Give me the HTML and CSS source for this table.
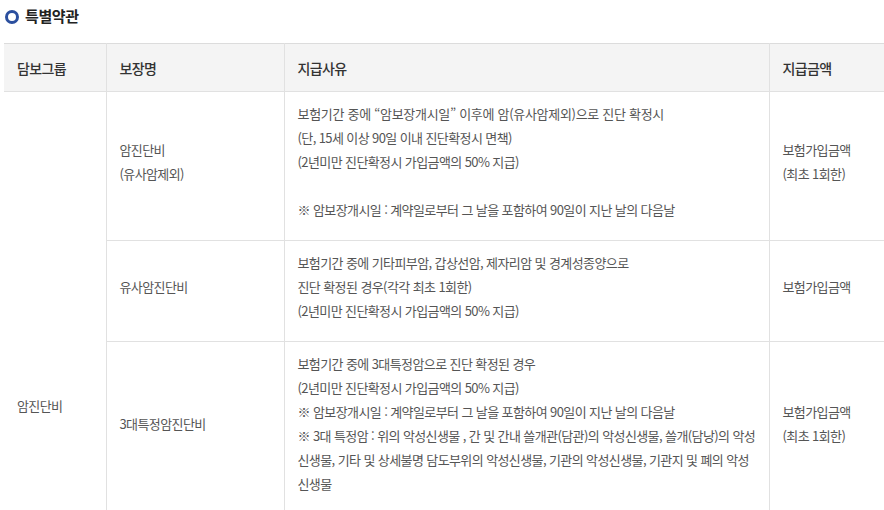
FILE: index.html
```html
<!DOCTYPE html>
<html lang="ko">
<head>
<meta charset="utf-8">
<link rel="stylesheet" href="styles.css">
</head>
<body>
<div class="wrap">
  <h3 class="title"><span class="dot"></span>특별약관</h3>
  <table class="terms">
    <colgroup>
      <col class="c1"><col class="c2"><col class="c3"><col class="c4">
    </colgroup>
    <thead>
      <tr><th>담보그룹</th><th>보장명</th><th>지급사유</th><th>지급금액</th></tr>
    </thead>
    <tbody>
      <tr>
        <td rowspan="3" class="group">암진단비</td>
        <td>암진단비<br>(유사암제외)</td>
        <td><span class="wide">보험기간 중에 “암보장개시일” 이후에 암(유사암제외)으로 진단 확정시</span><br>(단, 15세 이상 90일 이내 진단확정시 면책)<br>(2년미만 진단확정시 가입금액의 50% 지급)<br><br>※ 암보장개시일 : 계약일로부터 그 날을 포함하여 90일이 지난 날의 다음날</td>
        <td>보험가입금액<br>(최초 1회한)</td>
      </tr>
      <tr>
        <td>유사암진단비</td>
        <td>보험기간 중에 기타피부암, 갑상선암, 제자리암 및 경계성종양으로<br>진단 확정된 경우(각각 최초 1회한)<br>(2년미만 진단확정시 가입금액의 50% 지급)</td>
        <td>보험가입금액</td>
      </tr>
      <tr class="last">
        <td>3대특정암진단비</td>
        <td>보험기간 중에 3대특정암으로 진단 확정된 경우<br>(2년미만 진단확정시 가입금액의 50% 지급)<br>※ 암보장개시일 : 계약일로부터 그 날을 포함하여 90일이 지난 날의 다음날<br>※ 3대 특정암 : 위의 악성신생물 , 간 및 간내 쓸개관(담관)의 악성신생물, 쓸개(담낭)의 악성신생물, 기타 및 상세불명 담도부위의 악성신생물, 기관의 악성신생물, 기관지 및 폐의 악성신생물</td>
        <td>보험가입금액<br>(최초 1회한)</td>
      </tr>
    </tbody>
  </table>
</div>
</body>
</html>
```

FILE: styles.css
```css
* { box-sizing: border-box; }
html, body { margin: 0; padding: 0; background: #fff; }
body {
  font-family: "Noto Sans CJK KR", "Noto Sans", sans-serif;
  color: #555;
  overflow: hidden;
}
.wrap { padding: 7px 0 0 4px; width: 884px; }
.title {
  margin: 0 0 18px 0;
  display: flex;
  align-items: center;
  gap: 6px;
  font-size: 15px;
  font-weight: 700;
  line-height: 18px;
  color: #222;
  letter-spacing: -0.4px;
}
.dot {
  width: 14px;
  height: 14px;
  border: 3.5px solid #2b4f9e;
  border-radius: 50%;
  margin-left: 1px;
  margin-top: 1px;
}
.terms {
  width: 880px;
  border-collapse: collapse;
  table-layout: fixed;
  font-size: 13px;
  letter-spacing: -0.6px;
}
.c1 { width: 102px; }
.c2 { width: 178px; }
.c3 { width: 485px; }
.c4 { width: 115px; }
.terms th, .terms td {
  border: 1px solid #e1e1e1;
  text-align: left;
  vertical-align: middle;
  padding: 0 12px 0 13px;
}
.terms th:first-child, .terms td:first-child { border-left: 0; }
.terms th:last-child, .terms td:last-child { border-right: 0; }
.terms thead th {
  background: #f4f4f4;
  height: 48px;
  font-size: 14px;
  font-weight: 500;
  color: #333;
  border-top: 1px solid #dcdcdc;
}
.terms td {
  line-height: 24px;
  padding-top: 10px;
  padding-bottom: 18px;
  color: #555;
}
.terms .wide { letter-spacing: -0.3px; }
.terms .last td { padding-bottom: 30px; }
.terms td.group {
  vertical-align: top;
  padding-top: 302px;
  padding-bottom: 0;
}
```
